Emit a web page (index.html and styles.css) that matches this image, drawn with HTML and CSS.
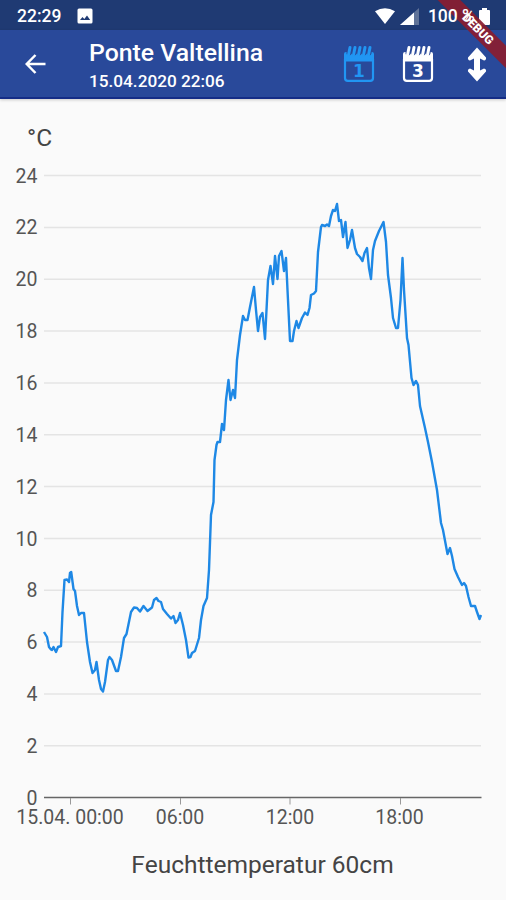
FILE: index.html
```html
<!DOCTYPE html>
<html lang="de">
<head>
  <meta charset="UTF-8">
  <meta name="viewport" content="width=device-width, initial-scale=1.0">
  <title>Ponte Valtellina</title>
  <link rel="stylesheet" href="styles.css">
</head>
<body>
  <div class="statusbar">
    <span class="clock">22:29</span>
    <svg class="picture" width="16" height="16" viewBox="0 0 16 16">
      <rect x="0.5" y="0.5" width="15" height="15" rx="1.5" fill="#fff"/>
      <path d="M3 12 L5.5 9 L7.3 11 L10 7.6 L13.2 12 Z" fill="#1f3a73"/>
    </svg>
    <div class="system">
      <svg width="20" height="16" viewBox="0 0 20 16">
        <path d="M0 3.3 Q10 -3 20 3.3 L10 16 Z" fill="#fff"/>
      </svg>
      <svg width="19" height="17" viewBox="0 0 19 17">
        <path d="M0 17 L19 0 V17 Z" fill="#607398"/>
        <path d="M0 17 L14 4.5 V17 Z" fill="#fff"/>
      </svg>
      <span class="percent">100 %</span>
      <svg class="battery" width="11" height="17" viewBox="0 0 11 17">
        <path d="M3 0 H8 V2 H10 Q11 2 11 3 V16 Q11 17 10 17 H1 Q0 17 0 16 V3 Q0 2 1 2 H3 Z" fill="#fff"/>
      </svg>
    </div>
  </div>
  <div class="appbar">
    <svg class="back" width="22" height="20" viewBox="0 0 22 20">
      <path d="M20.5 10 H2 M10.5 1 L1.7 10 L10.5 19" fill="none" stroke="#fff" stroke-width="2.5"/>
    </svg>
    <div class="title">
      <h1>Ponte Valtellina</h1>
      <p>15.04.2020 22:06</p>
    </div>
    <div class="actions">
      <svg class="calendar active" width="32" height="38" viewBox="0 0 32 38">
        <path class="sheet" d="M2 14 V33 Q2 35.8 4.8 35.8 H27.2 Q30 35.8 30 33 V14"/>
        <path class="head" d="M1 16.5 V9 Q1 7 3 7 H29 Q31 7 31 9 V16.5 Z"/>
        <path class="gap" d="M6 8 L7 2.5 M11 8 L12 2.5 M16 8 L17 2.5 M21 8 L22 2.5 M26 8 L27 2.5"/>
        <path class="ring" d="M5.5 10 L7 2.5 M10.5 10 L12 2.5 M15.5 10 L17 2.5 M20.5 10 L22 2.5 M25.5 10 L27 2.5"/>
        <text x="16" y="31.7">1</text>
      </svg>
      <svg class="calendar" width="32" height="38" viewBox="0 0 32 38">
        <path class="sheet" d="M2 14 V33 Q2 35.8 4.8 35.8 H27.2 Q30 35.8 30 33 V14"/>
        <path class="head" d="M1 16.5 V9 Q1 7 3 7 H29 Q31 7 31 9 V16.5 Z"/>
        <path class="gap" d="M6 8 L7 2.5 M11 8 L12 2.5 M16 8 L17 2.5 M21 8 L22 2.5 M26 8 L27 2.5"/>
        <path class="ring" d="M5.5 10 L7 2.5 M10.5 10 L12 2.5 M15.5 10 L17 2.5 M20.5 10 L22 2.5 M25.5 10 L27 2.5"/>
        <text class="wide" x="16" y="31.7">3</text>
      </svg>
      <svg class="updown" width="20" height="35" viewBox="0 0 20 35">
        <path d="M10 0.5 L19 10.5 Q19.5 13 17 13.5 L13 11.5 V23.5 L17 21.5 Q19.5 22 19 24.5 L10 34.5 L1 24.5 Q0.5 22 3 21.5 L7 23.5 V11.5 L3 13.5 Q0.5 13 1 10.5 Z" fill="#fff"/>
      </svg>
    </div>
  </div>
  <div class="debug"><span>DEBUG</span></div>

  <div class="chart">
    <h2 class="unit">°C</h2>
    <svg class="plot" width="506" height="680" viewBox="0 155 506 680">
      <g class="grid">
        <path d="M44 175.5 H481"/>
        <path d="M44 227.4 H481"/>
        <path d="M44 279.2 H481"/>
        <path d="M44 331 H481"/>
        <path d="M44 383 H481"/>
        <path d="M44 434.7 H481"/>
        <path d="M44 486.5 H481"/>
        <path d="M44 538.5 H481"/>
        <path d="M44 590.2 H481"/>
        <path d="M44 642 H481"/>
        <path d="M44 694 H481"/>
        <path d="M44 745.8 H481"/>
      </g>
      <path class="axis" d="M44 797.5 H481.5"/>
      <path class="ticks" d="M70.5 798 V804.5 M180.5 798 V804.5 M290 798 V804.5 M400.5 798 V804.5"/>
      <g class="ylabels">
        <text x="37.5" y="182.5">24</text>
        <text x="37.5" y="234.4">22</text>
        <text x="37.5" y="286.2">20</text>
        <text x="37.5" y="338">18</text>
        <text x="37.5" y="390">16</text>
        <text x="37.5" y="441.7">14</text>
        <text x="37.5" y="493.5">12</text>
        <text x="37.5" y="545.5">10</text>
        <text x="37.5" y="597.2">8</text>
        <text x="37.5" y="649">6</text>
        <text x="37.5" y="701">4</text>
        <text x="37.5" y="752.8">2</text>
        <text x="37.5" y="804.7">0</text>
      </g>
      <g class="xlabels">
        <text x="70" y="824">15.04. 00:00</text>
        <text x="180" y="824">06:00</text>
        <text x="290" y="824">12:00</text>
        <text x="399.5" y="824">18:00</text>
      </g>
      <polyline class="line" points="44,632 47,637 49,647 51,649.5 52,650 53.5,647 56,652 58,647 61,646 62.5,612 64.5,580 67,579.5 69,582 70,573 71.2,572 73.5,589 75,591 77,606 79,615 81,613 84,613 87,642 90,662 92.5,673 95,670 96.5,662 99,680 101,689 103,691.5 105,682 108,660 109.5,657 112,660 116,671 118,671 121,657 124,638 126.5,634 131,612 134,607.5 137,608 140,611.5 143.5,606 147.5,611 152,607.5 154,600 156.5,598 158.5,601 161,602 163,609 167,614 171,618.5 173.5,616 175.5,623 178,620 180,613 183,625 186,640 188.5,657.5 190.5,657 192,653 195,651 199,638 201,620 203.5,606 207,598 209,570 211,515 213.5,502 214.5,460 216.5,445 217.5,442 220,442 222,424 224,430 226,400 228.5,380 230.5,400 233,390 235,398 237,360 240,335 243,316 245,320 247.5,320 250,307 254,287 256,310 258,331 260,317 262.5,313 265,339 266.5,310 268,280 270.5,266 273,284 275,256 277.5,279 279,256 281.5,251 284,271 286,258 287.5,290 290,341 292.5,341 294,331 296.5,321 298.5,328 302,318 305,312.5 307.5,315 309.5,308 311,295 314,293.5 316,291 318,252 321,227 322,225 325,226 327,224.5 329,226 331,216 333,210 335,211 337,204 339,221 341,220 343,237 345.5,222 347.5,248 350,240 352,230 355,248 357,254 360,257 362.5,261 364.5,253 367,248 369,268 371,279 373,250 375,241 379,231 383.5,222 386,242 388,275 391,298 393,318 396,328 398,328 400.5,300 402.5,258 404,290 407,338 408.5,345 411.5,378 413.5,385 416,381 418,385 420,406 425,428 428,442 432,462 437,490 441,523 443,530 447.5,554 450,548 452,556 454.5,569 458,577 462,585 464,583 466,586 468.5,597 471,606 475,606 477,612 479.5,619 481,615"/>
    </svg>
    <p class="caption">Feuchttemperatur 60cm</p>
  </div>
</body>
</html>
```

FILE: styles.css
```css
*{
  box-sizing: border-box;
}
body{
  margin: 0;
  height: 900px;
  position: relative;
  overflow: hidden;
  background: #fafafa;
  font-family: Roboto, 'Liberation Sans', sans-serif;
}
h1, h2, p{
  margin: 0;
}
svg{
  display: block;
  flex: none;
}
.statusbar{
  height: 30px;
  padding: 2px 16px 0 17px;
  display: flex;
  align-items: center;
  background: #1f3a73;
  color: #fff;
  font-size: 17.5px;
  font-weight: 500;
}
.picture{
  margin-left: 16px;
}
.system{
  margin-left: auto;
  display: flex;
  align-items: center;
}
.system svg + svg{
  margin-left: 5px;
}
.percent{
  position: relative;
  z-index: 1;
  margin: 0 4px 0 9px;
  white-space: nowrap;
}
.appbar{
  height: 69px;
  padding: 0 19px 0 25px;
  display: flex;
  align-items: center;
  background: #29499a;
  border-bottom: 2px solid #152d87;
  box-shadow: 0 1px 3px rgba(0,0,0,0.2);
  color: #fff;
}
.title{
  margin-left: 42px;
  padding-top: 5px;
}
.title h1{
  font-size: 24.8px;
  font-weight: 500;
  line-height: 30px;
}
.title p{
  font-size: 17.2px;
  font-weight: 500;
  line-height: 26px;
}
.actions{
  margin-left: auto;
  padding-top: 1px;
  display: flex;
  align-items: center;
}
.calendar{
  margin-right: 27px;
  color: #fff;
}
.calendar + .updown{
  margin-left: 6px;
}
.calendar.active{
  color: #2196f3;
}
.calendar .sheet{
  fill: none;
  stroke: currentColor;
  stroke-width: 2.2;
}
.calendar .head{
  fill: currentColor;
}
.calendar .gap{
  stroke: #29499a;
  stroke-width: 5;
  stroke-linecap: round;
}
.calendar .ring{
  stroke: currentColor;
  stroke-width: 3;
  stroke-linecap: round;
}
.calendar text{
  fill: currentColor;
  font-family: 'DejaVu Sans', sans-serif;
  font-size: 17px;
  font-weight: bold;
  text-anchor: middle;
}
/* corner ribbon over both bars */
.debug{
  position: absolute;
  top: 0;
  right: 0;
  width: 80px;
  height: 80px;
  overflow: hidden;
}
.debug span{
  position: absolute;
  top: 20.5px;
  left: -13.5px;
  width: 130px;
  height: 16px;
  background: rgba(137,29,48,0.93);
  color: #fff;
  font-size: 12px;
  font-weight: 900;
  line-height: 16px;
  text-align: center;
  transform: rotate(45deg);
}
.unit{
  padding: 23px 0 0 27px;
  height: 56px;
  color: #444;
  font-size: 24.5px;
  font-weight: 400;
  line-height: 32px;
}
.grid path{
  stroke: #e4e4e4;
  stroke-width: 1.5;
}
.axis{
  stroke: #666;
  stroke-width: 1.5;
}
.ticks{
  stroke: #999;
  fill: none;
}
.plot text{
  fill: #555;
  font-size: 19.5px;
  font-weight: 400;
}
.ylabels{
  text-anchor: end;
}
.xlabels{
  text-anchor: middle;
}
.line{
  fill: none;
  stroke: #1e88e5;
  stroke-width: 2.4;
  stroke-linejoin: round;
}
.caption{
  padding-top: 13px;
  padding-left: 19px;
  text-align: center;
  color: #444;
  font-size: 24.5px;
  line-height: 34px;
  font-weight: 400;
}
```
